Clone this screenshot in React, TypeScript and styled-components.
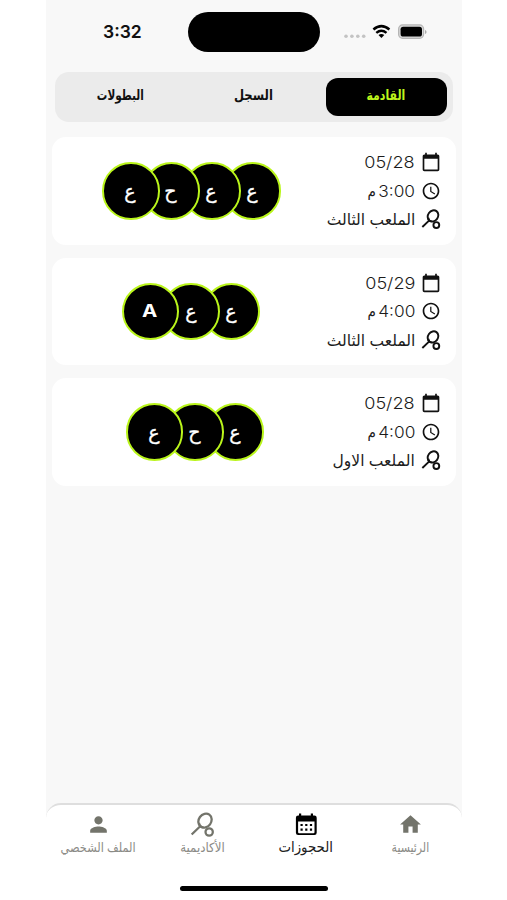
import React from "react";
import styled, { createGlobalStyle } from "styled-components";
import { MdHome, MdPerson, MdCalendarToday, MdAccessTime } from "react-icons/md";

const GlobalStyle = createGlobalStyle`
  * { box-sizing: border-box; }
  body { margin: 0; background: #fff; }
`;

const Phone = styled.div`
  direction: rtl;
  width: 416px;
  height: 900px;
  margin-left: 46px;
  background: #f8f8f8;
  display: flex;
  flex-direction: column;
  overflow: hidden;
  color: #1c1c1c;
  font-family: Inter, "DejaVu Sans", sans-serif;
`;

const StatusBar = styled.header`
  direction: ltr;
  height: 72px;
  flex: none;
  padding: 12px 0 0 57px;
  display: flex;
  align-items: flex-start;
`;

const Clock = styled.div`
  width: 85px;
  height: 40px;
  line-height: 40px;
  font-size: 17.5px;
  font-weight: 600;
  color: #111;
`;

const Island = styled.div`
  width: 132px;
  height: 40px;
  border-radius: 20px;
  background: #000;
`;

const Signals = styled.div`
  height: 40px;
  padding-left: 24px;
  display: flex;
  align-items: center;
`;

const Tabs = styled.nav`
  flex: none;
  width: 398px;
  height: 50px;
  margin-right: 9px;
  padding: 6px;
  border-radius: 14px;
  background: #ebebeb;
  display: flex;
  gap: 12px;
`;

const Tab = styled.div<{ $active?: boolean }>`
  width: 121px;
  height: 38px;
  border-radius: 12px;
  background: ${(p) => (p.$active ? "#000" : "transparent")};
  color: ${(p) => (p.$active ? "#bdf51c" : "#111")};
  display: flex;
  align-items: center;
  justify-content: center;
  padding: 0 1px 4px 0;
`;

const Label = styled.span<{ $size: number; $sx?: number; $bold?: boolean; $edge?: boolean }>`
  display: block;
  white-space: nowrap;
  line-height: 20px;
  font-size: ${(p) => p.$size}px;
  font-weight: ${(p) => (p.$bold ? 700 : 400)};
  transform: scaleX(${(p) => p.$sx ?? 1});
  transform-origin: ${(p) => (p.$edge ? "right" : "center")};
`;

const Cards = styled.main`
  flex: 1;
  padding: 15px 6px 0;
  display: flex;
  flex-direction: column;
  gap: 13px;
`;

const Card = styled.section`
  height: 107.5px;
  border-radius: 14px;
  background: #fff;
  display: flex;
  padding-right: 15px;
`;

const Info = styled.div<{ $width: number }>`
  width: ${(p) => p.$width}px;
  flex: none;
  padding-top: 11px;
`;

const InfoRow = styled.div`
  height: 28.6px;
  display: flex;
  align-items: center;
  gap: 6px;
  svg { flex: none; color: #111; }
`;

const Digits = styled.span<{ $sx: number }>`
  direction: ltr;
  display: block;
  font-size: 16px;
  font-weight: 300;
  line-height: 20px;
  transform: scaleX(${(p) => p.$sx});
  transform-origin: right;
`;

const TimeText = styled.div`
  display: flex;
  align-items: center;
`;

const DigitSlot = styled.div`
  width: 39px;
  display: flex;
`;

const Players = styled.div`
  direction: ltr;
  flex: 1;
  display: flex;
  align-items: center;
  justify-content: center;
`;

const Avatar = styled.div<{ $layer: number; $latin: boolean }>`
  position: relative;
  z-index: ${(p) => p.$layer};
  width: 57.5px;
  height: 57.5px;
  flex: none;
  border: 2px solid #baf51b;
  border-radius: 50%;
  background: #000;
  color: #fff;
  display: flex;
  align-items: center;
  justify-content: center;
  padding-right: 1px;
  font-size: ${(p) => (p.$latin ? 18 : 20)}px;
  font-weight: ${(p) => (p.$latin ? 700 : 400)};
  line-height: 24px;
  -webkit-text-stroke: ${(p) => (p.$latin ? 0 : 0.3)}px #fff;
  & + & { margin-left: -17px; }
`;

const Initial = styled.span<{ $latin: boolean }>`
  display: block;
  transform: scaleX(${(p) => (p.$latin ? 1.14 : 0.95)});
`;

const BottomNav = styled.footer`
  flex: none;
  height: 97px;
  border-top: 2px solid #dedede;
  border-radius: 15px 15px 0 0;
  background: #fff;
  display: flex;
  flex-direction: column;
`;

const NavItems = styled.div`
  display: flex;
  height: 81px;
`;

const NavItem = styled.div<{ $active?: boolean }>`
  width: 104px;
  padding-top: 7px;
  display: flex;
  flex-direction: column;
  align-items: center;
  color: ${(p) => (p.$active ? "#000" : "#73746b")};
  ${Label} { color: ${(p) => (p.$active ? "#222" : "#8b8b86")}; }
`;

const HomeIndicator = styled.div`
  width: 148px;
  height: 5px;
  border-radius: 3px;
  background: #000;
  margin-right: 134px;
`;

const Racket = ({ size, weight }: { size: number; weight: number }) => (
  <svg width={size} height={size} viewBox="0 0 24 24" fill="none" stroke="currentColor" strokeWidth={weight}>
    <ellipse cx="14.4" cy="8.3" rx="6" ry="7.1" transform="rotate(36 14.4 8.3)" />
    <path d="M1.6 21.6 9.3 14.2M8.6 10.5Q9.2 14.6 13 14.8" />
    <circle cx="18.4" cy="19.2" r="3.5" />
  </svg>
);

const CalendarGrid = () => (
  <svg width="25" height="25" viewBox="0 0 25 25">
    <path fill="currentColor" d="M5 1.5h2.2v2h9.6v-2H19v2h1.4a2.3 2.3 0 0 1 2.3 2.3v15a2.3 2.3 0 0 1-2.3 2.3H4.2a2.3 2.3 0 0 1-2.3-2.3v-15a2.3 2.3 0 0 1 2.3-2.3H5z" />
    <path fill="#fff" d="M4.1 9.4h16.4v10.8a1 1 0 0 1-1 1H5.1a1 1 0 0 1-1-1z" />
    <path fill="currentColor" d="M6.5 11.9h2.2v2.2H6.5zm4.7 0h2.2v2.2h-2.2zm4.7 0h2.2v2.2h-2.2zM6.5 16.5h2.2v2.2H6.5zm4.7 0h2.2v2.2h-2.2zm4.7 0h2.2v2.2h-2.2z" />
  </svg>
);

const StatusIcons = () => (
  <svg width="84" height="20" viewBox="0 0 84 20">
    <g fill="#c3c3c3">
      <circle cx="2" cy="14.3" r="1.8" />
      <circle cx="7.9" cy="14.3" r="1.8" />
      <circle cx="13.8" cy="14.3" r="1.8" />
      <circle cx="19.7" cy="14.3" r="1.8" />
    </g>
    <g fill="none" stroke="#000" strokeWidth="2.5">
      <path d="M29.4 7.5q8-6.8 16 0M32.3 10.9q5.1-4.2 10.2 0" />
    </g>
    <path d="M34.5 13q2.9-2.2 5.8 0l-2.9 3z" />
    <rect x="54.6" y="2.9" width="25" height="13.4" rx="4" fill="#d8d8d8" stroke="#b5b5b5" strokeWidth="1.2" />
    <rect x="56.6" y="4.7" width="21.4" height="9.8" rx="2.6" />
    <path d="M81 8v4q1.6-.5 1.6-2T81 8" fill="#aaa" />
  </svg>
);

type Booking = {
  date: string;
  time: string;
  court: string;
  width: number;
  players: string[];
};

const bookings: Booking[] = [
  { date: "05/28", time: "3:00", court: "الملعب الثالث", width: 110, players: ["ع", "ح", "ع", "ع"] },
  { date: "05/29", time: "4:00", court: "الملعب الثالث", width: 111, players: ["A", "ع", "ع"] },
  { date: "05/28", time: "4:00", court: "الملعب الاول", width: 103, players: ["ع", "ح", "ع"] },
];

const BookingCard = ({ date, time, court, width, players }: Booking) => (
  <Card>
    <Info $width={width}>
      <InfoRow>
        <MdCalendarToday size={20} />
        <Digits $sx={1.13}>{date}</Digits>
      </InfoRow>
      <InfoRow>
        <MdAccessTime size={20} />
        <TimeText>
          <DigitSlot><Digits $sx={1.08}>{time}</Digits></DigitSlot>
          <Label $size={15} $sx={0.9}>م</Label>
        </TimeText>
      </InfoRow>
      <InfoRow>
        <Racket size={20} weight={2.3} />
        <Label $size={16} $sx={0.97} $edge>{court}</Label>
      </InfoRow>
    </Info>
    <Players>
      {players.map((p, i) => (
        <Avatar key={i} $layer={players.length - i} $latin={p === "A"}>
          <Initial $latin={p === "A"}>{p}</Initial>
        </Avatar>
      ))}
    </Players>
  </Card>
);

export default function App() {
  return (
    <>
      <GlobalStyle />
      <Phone>
        <StatusBar>
          <Clock>3:32</Clock>
          <Island />
          <Signals><StatusIcons /></Signals>
        </StatusBar>
        <Tabs>
          <Tab $active><Label $size={14} $sx={0.78} $bold>القادمة</Label></Tab>
          <Tab><Label $size={14} $sx={0.83} $bold>السجل</Label></Tab>
          <Tab><Label $size={14} $sx={0.75} $bold>البطولات</Label></Tab>
        </Tabs>
        <Cards>
          {bookings.map((b, i) => <BookingCard key={i} {...b} />)}
        </Cards>
        <BottomNav>
          <NavItems>
            <NavItem><MdHome size={25} /><Label $size={13} $sx={0.84}>الرئيسية</Label></NavItem>
            <NavItem $active><CalendarGrid /><Label $size={15} $sx={0.89}>الحجوزات</Label></NavItem>
            <NavItem><Racket size={25} weight={2.2} /><Label $size={13} $sx={0.91}>الأكاديمية</Label></NavItem>
            <NavItem><MdPerson size={25} /><Label $size={13} $sx={0.87}>الملف الشخصي</Label></NavItem>
          </NavItems>
          <HomeIndicator />
        </BottomNav>
      </Phone>
    </>
  );
}
